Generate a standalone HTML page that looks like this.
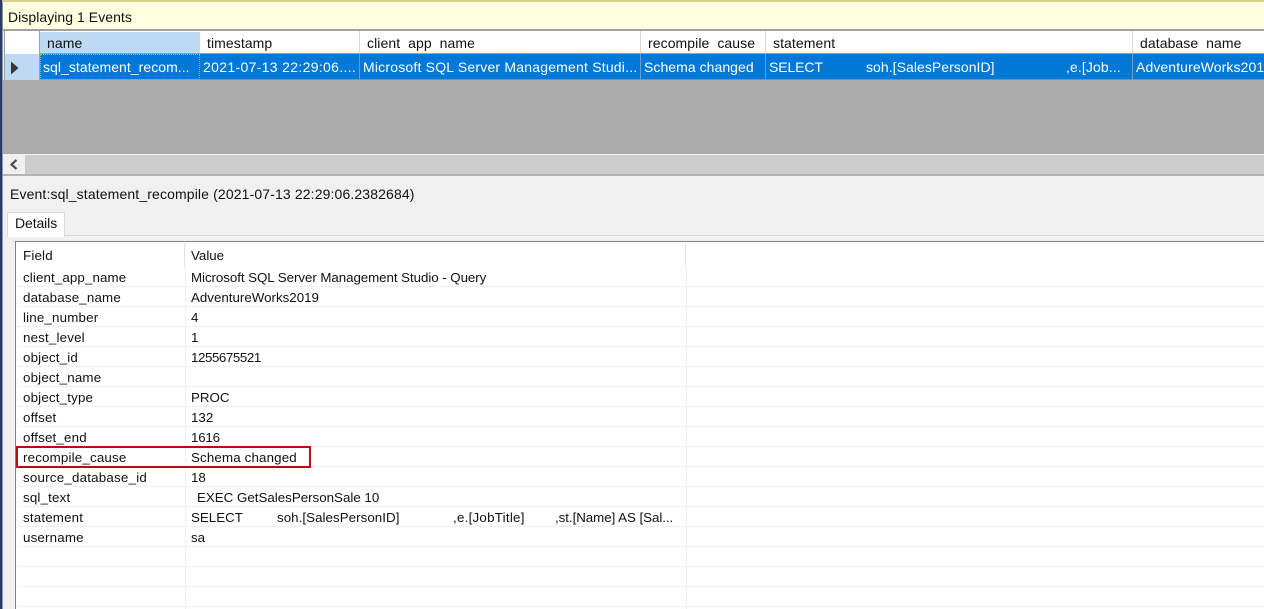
<!DOCTYPE html>
<html><head><meta charset="utf-8">
<style>
html,body{margin:0;padding:0;width:1264px;height:609px;overflow:hidden;background:#f0f0f0}
body{position:relative;font-family:"Liberation Sans",Arial,sans-serif;font-size:13.33px;color:#111}
.a{position:absolute}
.t{position:absolute;white-space:pre;line-height:16px}
.big{font-size:14px}
.h{top:35px;font-size:14px;letter-spacing:.08px}
.c{top:59px;color:#fff;font-size:14px;letter-spacing:.05px}
.r{left:23px;letter-spacing:.18px}
.v{left:191px}
.hl{position:absolute;left:17px;width:1247px;height:1px;background:#f0f0f0}
</style></head><body>
<div class="a" style="left:0;top:0;width:2px;height:609px;background:#2b3a63"></div>
<div class="a" style="left:2px;top:0;width:1px;height:609px;background:#8d94a8"></div>
<div class="a" style="left:3px;top:0;width:1261px;height:30px;background:#ffffe1"></div>
<div class="a" style="left:0;top:0;width:1264px;height:2px;background:#d6cf8e"></div>
<div class="a" style="left:0;top:0;width:2px;height:2px;background:#2b3a63"></div>
<div class="t big" style="left:8px;top:9px;letter-spacing:.05px">Displaying 1 Events</div>
<div class="a" style="left:3px;top:29px;width:1261px;height:2px;background:#a0a0a0"></div>

<div class="a" style="left:4px;top:31px;width:1260px;height:23px;background:#fff"></div>
<div class="a" style="left:4px;top:31px;width:1px;height:49px;background:#a0a0a0"></div>
<div class="a" style="left:40px;top:32px;width:160px;height:21px;background:#bcdaf3"></div>
<div class="a" style="left:39px;top:31px;width:1px;height:49px;background:#a0a0a0"></div>
<div class="a" style="left:359px;top:31px;width:1px;height:22px;background:#d8d8d8"></div>
<div class="a" style="left:640px;top:31px;width:1px;height:22px;background:#d8d8d8"></div>
<div class="a" style="left:765px;top:31px;width:1px;height:22px;background:#d8d8d8"></div>
<div class="a" style="left:1132px;top:31px;width:1px;height:22px;background:#d8d8d8"></div>
<div class="t h" style="left:47px">name</div>
<div class="t h" style="left:207px">timestamp</div>
<div class="t h" style="left:367px">client  app  name</div>
<div class="t h" style="left:648px">recompile  cause</div>
<div class="t h" style="left:773px">statement</div>
<div class="t h" style="left:1140px">database  name</div>

<div class="a" style="left:5px;top:54px;width:34px;height:26px;background:#bcdaf3"></div>
<svg class="a" style="left:10px;top:61px" width="10" height="14"><path d="M1 .5L8.5 7L1 13.5Z" fill="#383838"/></svg>
<div class="a" style="left:40px;top:53px;width:1224px;height:27px;background:#0078d7"></div>
<div class="a" style="left:40px;top:53px;width:1224px;height:1px;background:#a0a0a0"></div>
<div class="a" style="left:40px;top:79px;width:1224px;height:1px;background:#6a93bd"></div>
<div class="a" style="left:359px;top:54px;width:1px;height:26px;background:#6a9dcc"></div>
<div class="a" style="left:640px;top:54px;width:1px;height:26px;background:#6a9dcc"></div>
<div class="a" style="left:765px;top:54px;width:1px;height:26px;background:#6a9dcc"></div>
<div class="a" style="left:1132px;top:54px;width:1px;height:26px;background:#6a9dcc"></div>
<div class="a" style="left:40px;top:54px;width:158px;height:24px;border:1px dotted #f0a020"></div>
<div class="t c" style="left:43px">sql_statement_recom...</div>
<div class="t c" style="left:203px;letter-spacing:.33px">2021-07-13 22:29:06....</div>
<div class="t c" style="left:363px;letter-spacing:.2px">Microsoft SQL Server Management Studi...</div>
<div class="t c" style="left:644px">Schema changed</div>
<div class="t c" style="left:769px;letter-spacing:-.1px">SELECT</div>
<div class="t c" style="left:866px">soh.[SalesPersonID]</div>
<div class="t c" style="left:1066px;letter-spacing:.1px">,e.[Job...</div>
<div class="t c" style="left:1136px;letter-spacing:.1px">AdventureWorks201</div>

<div class="a" style="left:3px;top:80px;width:1261px;height:74px;background:#ababab"></div>
<div class="a" style="left:3px;top:154px;width:1261px;height:1px;background:#f0f0f0"></div>
<div class="a" style="left:3px;top:155px;width:22px;height:19px;background:#f0f0f0"></div>
<div class="a" style="left:25px;top:155px;width:1239px;height:19px;background:#cdcdcd"></div>
<svg class="a" style="left:9px;top:159px" width="10" height="12"><path d="M7.5 1L2.5 5.5L7.5 10" fill="none" stroke="#505050" stroke-width="2.2"/></svg>
<div class="a" style="left:3px;top:174px;width:1261px;height:2px;background:#b4b4b4"></div>

<div class="t big" style="left:10px;top:186px;letter-spacing:.13px">Event:sql_statement_recompile (2021-07-13 22:29:06.2382684)</div>

<div class="a" style="left:7px;top:212px;width:56px;height:24px;background:#fff;border:1px solid #d9d9d9;border-bottom:none"></div>
<div class="t big" style="left:15px;top:215px;letter-spacing:-.1px">Details</div>
<div class="a" style="left:64px;top:235px;width:1200px;height:1px;background:#d9d9d9"></div>

<div class="a" style="left:15px;top:241px;width:1249px;height:368px;background:#fff"></div>
<div class="a" style="left:15px;top:241px;width:1249px;height:1px;background:#82828c"></div>
<div class="a" style="left:15px;top:241px;width:1px;height:368px;background:#82828c"></div>
<div class="a" style="left:184px;top:243px;width:1px;height:24px;background:#e2e2e2"></div>
<div class="a" style="left:685px;top:243px;width:1px;height:24px;background:#e2e2e2"></div>
<div class="a" style="left:185px;top:267px;width:1px;height:342px;background:#f0f0f0"></div>
<div class="a" style="left:686px;top:267px;width:1px;height:342px;background:#f0f0f0"></div>
<div class="hl" style="top:286px"></div><div class="hl" style="top:306px"></div><div class="hl" style="top:326px"></div><div class="hl" style="top:346px"></div><div class="hl" style="top:366px"></div><div class="hl" style="top:386px"></div><div class="hl" style="top:406px"></div><div class="hl" style="top:426px"></div><div class="hl" style="top:446px"></div><div class="hl" style="top:466px"></div><div class="hl" style="top:486px"></div><div class="hl" style="top:506px"></div><div class="hl" style="top:526px"></div><div class="hl" style="top:546px"></div><div class="hl" style="top:566px"></div><div class="hl" style="top:586px"></div><div class="hl" style="top:606px"></div>

<div class="t r" style="top:248px">Field</div><div class="t v" style="top:248px">Value</div>
<div class="t r" style="top:270px;letter-spacing:.12px">client_app_name</div><div class="t v" style="top:270px;letter-spacing:-.06px">Microsoft SQL Server Management Studio - Query</div>
<div class="t r" style="top:290px">database_name</div><div class="t v" style="top:290px">AdventureWorks2019</div>
<div class="t r" style="top:310px">line_number</div><div class="t v" style="top:310px">4</div>
<div class="t r" style="top:330px">nest_level</div><div class="t v" style="top:330px">1</div>
<div class="t r" style="top:350px">object_id</div><div class="t v" style="top:350px;letter-spacing:-.43px">1255675521</div>
<div class="t r" style="top:370px">object_name</div>
<div class="t r" style="top:390px">object_type</div><div class="t v" style="top:390px">PROC</div>
<div class="t r" style="top:410px">offset</div><div class="t v" style="top:410px">132</div>
<div class="t r" style="top:430px">offset_end</div><div class="t v" style="top:430px;letter-spacing:-.2px">1616</div>
<div class="t r" style="top:450px">recompile_cause</div><div class="t v" style="top:450px;letter-spacing:.15px">Schema changed</div>
<div class="t r" style="top:470px;letter-spacing:.22px">source_database_id</div><div class="t v" style="top:470px">18</div>
<div class="t r" style="top:490px">sql_text</div><div class="t v" style="top:490px;left:197px">EXEC GetSalesPersonSale 10</div>
<div class="t r" style="top:510px">statement</div><div class="t v" style="top:510px">SELECT</div><div class="t v" style="top:510px;left:277px;letter-spacing:.05px">soh.[SalesPersonID]</div><div class="t v" style="top:510px;left:453px;letter-spacing:.25px">,e.[JobTitle]</div><div class="t v" style="top:510px;left:555px;letter-spacing:-.05px">,st.[Name] AS [Sal...</div>
<div class="t r" style="top:530px">username</div><div class="t v" style="top:530px">sa</div>

<div class="a" style="left:16px;top:446px;width:291px;height:18px;border:2px solid #b00f14"></div>
</body></html>
